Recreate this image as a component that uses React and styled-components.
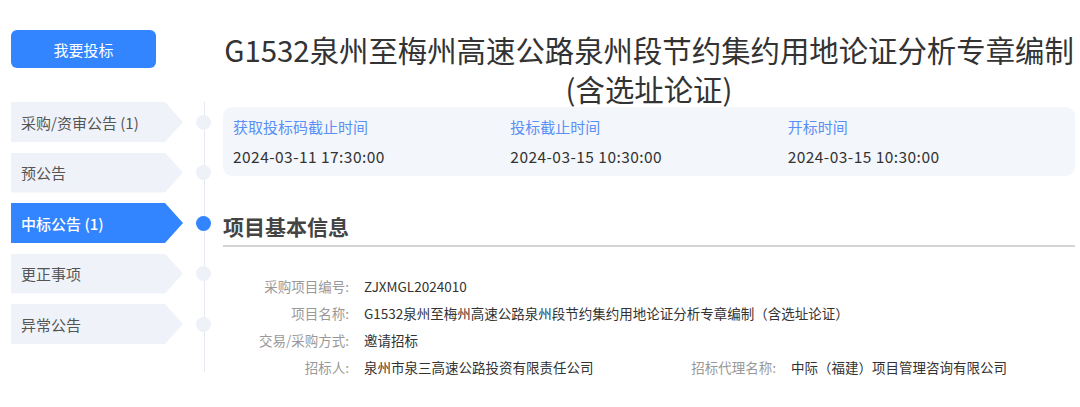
import React from "react";
import styled, { createGlobalStyle, css } from "styled-components";

const GlobalStyle = createGlobalStyle`
  html, body {
    margin: 0;
    padding: 0;
    background: #fff;
  }
  body {
    font-family: "Noto Sans CJK SC", "Noto Sans", sans-serif;
    color: #333;
  }
`;

const Page = styled.div`
  display: flex;
  align-items: flex-start;
  padding: 30px 5px 0 11px;
  height: 377px;
  overflow: hidden;
`;

const Sidebar = styled.aside`
  width: 212px;
  flex-shrink: 0;
  display: flex;
  flex-direction: column;
`;

const BidButton = styled.button`
  width: 145px;
  height: 38px;
  border: none;
  border-radius: 6px;
  background: #3385ff;
  color: #fff;
  font-family: inherit;
  font-size: 15px;
  cursor: pointer;
`;

const NavList = styled.ul`
  list-style: none;
  margin: 34px 0 0;
  padding: 0;
  position: relative;
  display: flex;
  flex-direction: column;
  gap: 10.5px;

  &::before {
    content: "";
    position: absolute;
    left: 192.5px;
    top: 0;
    bottom: -28px;
    width: 1px;
    background: #e6e9ef;
  }
`;

const NavRow = styled.li`
  display: grid;
  grid-template-columns: 172px 40px;
  align-items: center;
  height: 40px;
`;

const NavItem = styled.div`
  height: 40px;
  display: flex;
  align-items: center;
  padding-left: 10px;
  font-size: 15px;
  color: #555;
  background: #eff3f9;
  clip-path: polygon(0 0, 154px 0, 100% 50%, 154px 100%, 0 100%);

  ${(p) =>
    p.$active &&
    css`
      background: #3385ff;
      color: #fff;
      font-weight: 500;
    `}
`;

const Dot = styled.span`
  justify-self: center;
  position: relative;
  z-index: 1;
  width: 15px;
  height: 15px;
  border-radius: 50%;
  background: ${(p) => (p.$active ? "#3385ff" : "#eef2f8")};
`;

const Main = styled.main`
  flex: 1;
  min-width: 0;
`;

const Title = styled.h1`
  margin: 0;
  font-size: 29.4px;
  font-weight: 400;
  line-height: 39px;
  text-align: center;
  color: #333;
`;

const TimeBox = styled.div`
  display: grid;
  grid-template-columns: repeat(3, 1fr);
  padding: 10px 10px;
  margin-top: -1px;
  background: #f3f6fa;
  border-radius: 9px;
`;

const TimeCell = styled.div`
  display: flex;
  flex-direction: column;
  gap: 9px;
  font-size: 15px;
  line-height: 20px;
`;

const TimeLabel = styled.span`
  color: #5a90f5;
`;

const TimeValue = styled.span`
  color: #333;
  font-size: 15.5px;
  letter-spacing: 0.45px;
`;

const SectionHeader = styled.h2`
  margin: 32px 0 0;
  height: 37px;
  line-height: 37px;
  font-size: 21px;
  font-weight: 700;
  color: #444;
  border-bottom: 2px solid #d4d4d4;
`;

const Details = styled.dl`
  margin: 25px 0 0;
  display: grid;
  grid-template-columns: 141px 286px 141px 1fr;
  grid-auto-rows: 27px;
  align-items: center;
  font-size: 13.5px;
`;

const Label = styled.dt`
  text-align: right;
  padding-right: 15px;
  color: #999;
  white-space: nowrap;
`;

const Value = styled.dd`
  margin: 0;
  color: #333;
  white-space: nowrap;
  grid-column: ${(p) => (p.$wide ? "2 / 5" : "auto")};
`;

const navItems = [
  { label: "采购/资审公告 (1)" },
  { label: "预公告" },
  { label: "中标公告 (1)", active: true },
  { label: "更正事项" },
  { label: "异常公告" },
];

const times = [
  { label: "获取投标码截止时间", value: "2024-03-11 17:30:00" },
  { label: "投标截止时间", value: "2024-03-15 10:30:00" },
  { label: "开标时间", value: "2024-03-15 10:30:00" },
];

const App = () => {
  return (
    <>
      <GlobalStyle />
      <Page>
        <Sidebar>
          <BidButton>我要投标</BidButton>
          <NavList>
            {navItems.map((item) => (
              <NavRow key={item.label}>
                <NavItem $active={item.active}>{item.label}</NavItem>
                <Dot $active={item.active} />
              </NavRow>
            ))}
          </NavList>
        </Sidebar>

        <Main>
          <Title>
            G1532泉州至梅州高速公路泉州段节约集约用地论证分析专章编制
            <br />
            (含选址论证)
          </Title>

          <TimeBox>
            {times.map((t) => (
              <TimeCell key={t.label}>
                <TimeLabel>{t.label}</TimeLabel>
                <TimeValue>{t.value}</TimeValue>
              </TimeCell>
            ))}
          </TimeBox>

          <SectionHeader>项目基本信息</SectionHeader>

          <Details>
            <Label>采购项目编号:</Label>
            <Value $wide>ZJXMGL2024010</Value>
            <Label>项目名称:</Label>
            <Value $wide>
              G1532泉州至梅州高速公路泉州段节约集约用地论证分析专章编制（含选址论证）
            </Value>
            <Label>交易/采购方式:</Label>
            <Value $wide>邀请招标</Value>
            <Label>招标人:</Label>
            <Value>泉州市泉三高速公路投资有限责任公司</Value>
            <Label>招标代理名称:</Label>
            <Value>中际（福建）项目管理咨询有限公司</Value>
          </Details>
        </Main>
      </Page>
    </>
  );
};

export default App;
